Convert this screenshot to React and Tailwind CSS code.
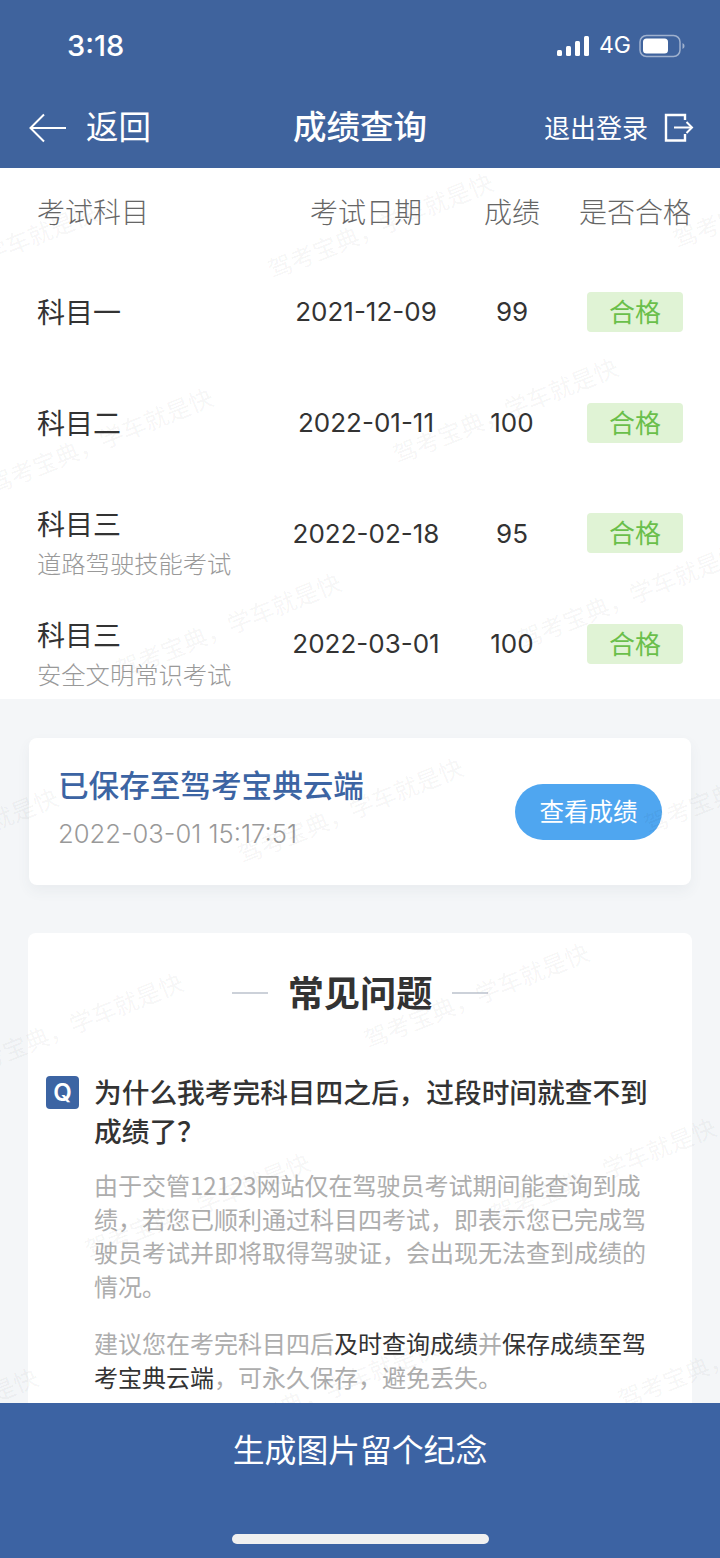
const marks = [
  [-16, 255], [380, 225], [785, 195],
  [100, 440], [505, 410],
  [228, 625], [630, 595],
  [-55, 840], [350, 810], [756, 780],
  [70, 1025], [476, 995],
  [197, 1205], [603, 1170],
  [-75, 1420], [325, 1390], [730, 1355],
];

const rows = [
  { name: "科目一", date: "2021-12-09", score: "99" },
  { name: "科目二", date: "2022-01-11", score: "100" },
  { name: "科目三", sub: "道路驾驶技能考试", date: "2022-02-18", score: "95" },
  { name: "科目三", sub: "安全文明常识考试", date: "2022-03-01", score: "100" },
];

const cols = "grid grid-cols-[229px_200px_92px_154px] pl-[37px] pr-[8px] items-center";

function Signal() {
  return (
    <svg width="32" height="20" viewBox="0 0 32 20" fill="#fff">
      <rect x="0" y="14" width="5" height="6" rx="1.5" />
      <rect x="9" y="10" width="5" height="10" rx="1.5" />
      <rect x="18" y="5" width="5" height="15" rx="1.5" />
      <rect x="27" y="0" width="5" height="20" rx="1.5" />
    </svg>
  );
}

function Battery() {
  return (
    <svg width="46" height="24" viewBox="0 0 46 24">
      <rect x="1" y="1.5" width="40" height="21" rx="6.5" fill="none" stroke="#fff" strokeOpacity="0.5" strokeWidth="1.5" />
      <rect x="4" y="4.5" width="25" height="15" rx="3.5" fill="#fff" />
      <path d="M43.5 9 C45 9.8 45.5 10.8 45.5 12 C45.5 13.2 45 14.2 43.5 15 Z" fill="#fff" fillOpacity="0.5" />
    </svg>
  );
}

function BackArrow() {
  return (
    <svg width="38" height="30" viewBox="0 0 38 30" fill="none" stroke="#fff" strokeWidth="2">
      <path d="M37 15 H2" />
      <path d="M15 1.5 L1.5 15 L15 28.5" />
    </svg>
  );
}

function Logout() {
  return (
    <svg width="30" height="30" viewBox="0 0 30 30" fill="none" stroke="#fff" strokeWidth="2.4">
      <path d="M21 7 V2 H2 V27.5 H21 V21" />
      <path d="M10 14.5 H28" strokeWidth="2" />
      <path d="M22.5 9 L28 14.5 L22.5 20" strokeWidth="2" />
    </svg>
  );
}

export default function App() {
  return (
    <div className="relative flex flex-col w-[720px] h-[1558px] overflow-hidden bg-[#f4f6f8] font-['Noto_Sans_CJK_SC','Noto_Sans',sans-serif]">
      <header className="h-[168px] shrink-0 bg-[#3f639d] text-white flex flex-col">
        <div className="h-[91px] flex items-center pl-[67px] pr-[35px] justify-between">
          <span className="text-[29px] font-medium font-['Inter',sans-serif] leading-none">3:18</span>
          <div className="flex items-center">
            <Signal />
            <span className="ml-[10px] mr-[8px] text-[23px] font-['Inter',sans-serif] leading-none">4G</span>
            <Battery />
          </div>
        </div>
        <div className="relative flex-1 flex items-center justify-between pl-[29px] pr-[26px] pb-[4px]">
          <div className="flex items-center gap-[19px]">
            <BackArrow />
            <span className="text-[32.5px] leading-none -mt-[4px]">返回</span>
          </div>
          <span className="absolute left-0 right-0 top-[15px] text-center text-[33.5px] font-medium leading-[38px]">成绩查询</span>
          <div className="flex items-center gap-[16px]">
            <span className="text-[26px] leading-none -mt-[2px]">退出登录</span>
            <Logout />
          </div>
        </div>
      </header>

      <main className="relative flex-1 overflow-hidden">
        <section className="bg-white h-[531px]">
          <div className={`${cols} h-[86px] text-[28px] text-[#666] font-light mb-[2.6px]`}>
            <span>考试科目</span>
            <span className="text-center">考试日期</span>
            <span className="text-center">成绩</span>
            <span className="text-center">是否合格</span>
          </div>
          {rows.map((r, i) => (
            <div key={i} className={`${cols} h-[110.67px] text-[#333]`}>
              <div className={`flex flex-col ${r.sub ? "mt-[20px]" : "-mt-[2px]"}`}>
                <span className="text-[28px] leading-[40px]">{r.name}</span>
                {r.sub && <span className="text-[24.3px] leading-[40px] text-[#999] font-light">{r.sub}</span>}
              </div>
              <span className="text-center text-[26px] font-['Inter',sans-serif]">{r.date}</span>
              <span className="text-center text-[26px] font-['Inter',sans-serif]">{r.score}</span>
              <div className="flex justify-center">
                <span className="w-[96px] h-[40px] rounded-[4px] bg-[#e0f3d5] text-[#6abf4b] text-[26px] leading-none pb-[2px] flex items-center justify-center">合格</span>
              </div>
            </div>
          ))}
        </section>

        <section className="mx-[29px] mt-[39px] h-[147px] bg-white rounded-[8px] shadow-[0_6px_14px_rgba(60,80,110,0.06)] flex items-center justify-between pl-[29px] pr-[29px]">
          <div className="flex flex-col -mt-[6px]">
            <span className="text-[30.6px] font-medium text-[#3c64a3] leading-[42px] -mt-[2px]">已保存至驾考宝典云端</span>
            <span className="text-[25.6px] text-[#999] font-['Inter',sans-serif] font-light leading-[36px] mt-[11px]">2022-03-01 15:17:51</span>
          </div>
          <button className="w-[147px] h-[56px] rounded-full bg-[#4fa6f0] text-white text-[24.5px]">查看成绩</button>
        </section>

        <section className="mx-[28px] mt-[48px] h-[600px] bg-white rounded-[8px] pt-[36px] pl-[18px] pr-[40px]">
          <div className="flex items-center justify-center gap-[20px] -ml-[18px] -mr-[40px] h-[44px]">
            <span className="w-[36px] h-[2px] bg-[#ccd1d9] mt-[4px]" />
            <span className="text-[36.2px] font-bold text-[#333] leading-none">常见问题</span>
            <span className="w-[36px] h-[2px] bg-[#ccd1d9] mt-[4px]" />
          </div>
          <div className="flex mt-[63px] gap-[15px]">
            <span className="w-[33px] h-[33px] shrink-0 rounded-[4px] bg-[#3c64a3] text-white flex items-center justify-center text-[24px] font-semibold font-['Inter',sans-serif]">Q</span>
            <div className="min-w-0">
              <p className="text-[27.7px] font-medium text-[#333] leading-[39px] -mt-[4px]">为什么我考完科目四之后，过段时间就查不到成绩了？</p>
              <p className="mt-[18px] text-[24px] text-[#adadad] leading-[33.7px]">由于交管12123网站仅在驾驶员考试期间能查询到成绩，若您已顺利通过科目四考试，即表示您已完成驾驶员考试并即将取得驾驶证，会出现无法查到成绩的情况。</p>
              <p className="mt-[23px] text-[24px] text-[#adadad] leading-[33.7px]">建议您在考完科目四后<span className="text-[#333]">及时查询成绩</span>并<span className="text-[#333]">保存成绩至驾考宝典云端</span>，可永久保存，避免丢失。</p>
            </div>
          </div>
        </section>

        <div className="absolute inset-0 pointer-events-none">
          {marks.map(([x, y], i) => (
            <span
              key={i}
              className="absolute -translate-x-1/2 -translate-y-1/2 -rotate-[22deg] whitespace-nowrap text-[24px] leading-none text-black/[0.05]"
              style={{ left: x, top: y - 168 }}
            >
              驾考宝典，学车就是快
            </span>
          ))}
        </div>
      </main>

      <footer className="relative z-10 h-[155px] shrink-0 bg-[#3c63a3] flex flex-col items-center">
        <span className="mt-[22px] text-[31.8px] text-white leading-[46px]">生成图片留个纪念</span>
        <span className="mt-[63px] w-[257px] h-[10px] rounded-full bg-[#f0f0f0]" />
      </footer>
    </div>
  );
}
